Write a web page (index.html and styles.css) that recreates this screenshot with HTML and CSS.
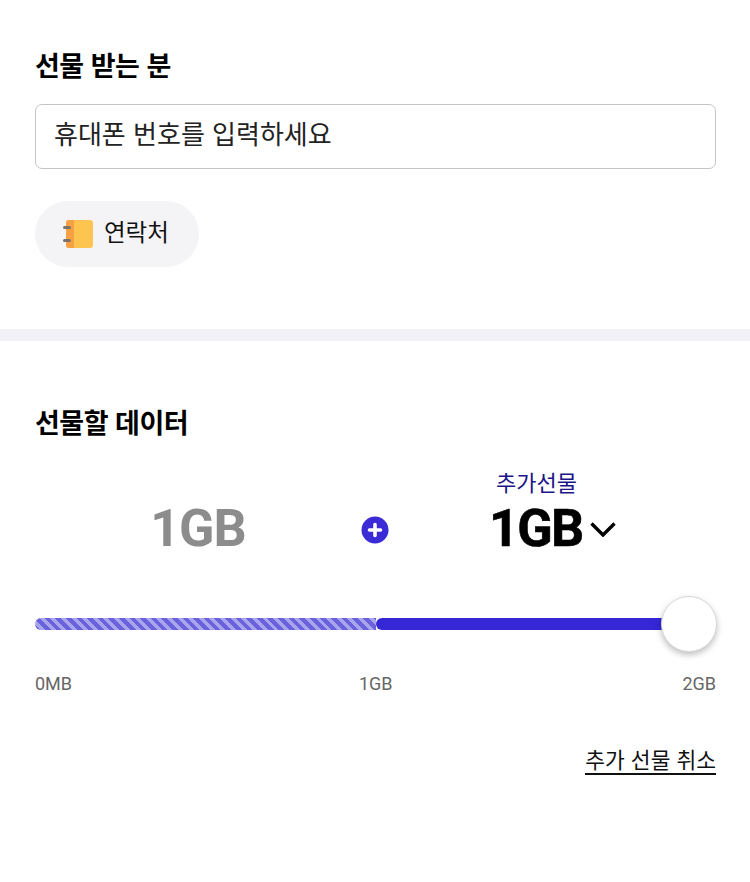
FILE: index.html
```html
<!DOCTYPE html>
<html lang="ko">
<head>
    <meta charset="UTF-8">
    <title>데이터 선물하기</title>
    <link rel="stylesheet" href="styles.css">
</head>
<body>
    <section class="receiver">
        <h2>선물 받는 분</h2>
        <div class="phone-input">휴대폰 번호를 입력하세요</div>
        <button class="contact-btn">
            <svg width="32" height="30" viewBox="0 0 32 30">
                <rect x="3" y="1" width="27" height="28" rx="3" fill="#fdc44f"/>
                <path d="M6 1h5v28H6a3 3 0 0 1-3-3V4a3 3 0 0 1 3-3z" fill="#f7a044"/>
                <rect x="0" y="7" width="8" height="3" rx="1.5" fill="#7a736c"/>
                <rect x="0" y="20" width="8" height="3" rx="1.5" fill="#7a736c"/>
            </svg>
            <span class="contact-label">연락처</span>
        </button>
    </section>

    <div class="divider"></div>

    <section class="data">
        <h2>선물할 데이터</h2>
        <div class="amounts">
            <div class="amount base">1GB</div>
            <svg class="plus" width="28" height="28" viewBox="0 0 28 28">
                <circle cx="14" cy="14" r="13.5" fill="#3b2bd6"/>
                <path d="M14 8.5v11M8.5 14h11" stroke="#fff" stroke-width="3.6" stroke-linecap="round"/>
            </svg>
            <div class="extra">
                <div class="extra-label">추가선물</div>
                <div class="extra-value">
                    <span class="amount amount-extra">1GB</span>
                    <svg width="26" height="16" viewBox="0 0 26 16">
                        <path d="M1.5 2.5l11.5 11.5 11.5-11.5" fill="none" stroke="#000" stroke-width="3.4"/>
                    </svg>
                </div>
            </div>
        </div>

        <div class="slider">
            <div class="track">
                <div class="track-base"></div>
                <div class="track-extra"></div>
            </div>
            <div class="thumb"></div>
        </div>
        <div class="scale">
            <span>0MB</span>
            <span class="scale-mid">1GB</span>
            <span>2GB</span>
        </div>

        <div class="cancel-row">
            <a class="cancel" href="#">추가 선물 취소</a>
        </div>
    </section>
</body>
</html>
```

FILE: styles.css
```css
body {
    font-family: 'Noto Sans CJK KR', 'Noto Sans', sans-serif;
    margin: 0;
    padding: 0;
    background: #fff;
    color: #000;
    width: 750px;
    height: 882px;
    overflow: hidden;
}

h2 {
    font-size: 27px;
    line-height: 36px;
    font-weight: 700;
    margin: 0;
    letter-spacing: -0.5px;
}

.receiver {
    height: 329px;
    box-sizing: border-box;
    padding: 47px 34px 0 35px;
}

.phone-input {
    margin-top: 21px;
    height: 65px;
    box-sizing: border-box;
    border: 1px solid #c4c4c8;
    border-radius: 7px;
    padding: 0 18px;
    font-size: 26px;
    line-height: 56px;
    color: #222;
}

.contact-btn {
    display: flex;
    align-items: center;
    gap: 10px;
    width: 164px;
    height: 66px;
    margin-top: 32px;
    padding: 0 0 0 28px;
    border: none;
    border-radius: 33px;
    background: #f4f4f6;
    font-family: inherit;
    font-size: 23.5px;
    color: #111;
}

.contact-label {
    margin-bottom: 6px;
    margin-left: -1px;
}

.divider {
    height: 12px;
    background: #f1f1f7;
}

.data {
    padding: 63px 34px 0 35px;
}

.amounts {
    display: flex;
    align-items: flex-end;
    height: 107px;
    margin-top: 12px;
}

.amount {
    font-family: Roboto, sans-serif;
    font-size: 52px;
    font-weight: 700;
    line-height: 60px;
    letter-spacing: -1px;
}

.amount-extra {
    letter-spacing: -1.6px;
    -webkit-text-stroke: 0.6px #000;
}

.base {
    width: 326px;
    text-align: center;
    color: #8c8c8c;
}

.plus {
    margin-bottom: 15px;
}

.extra {
    margin-left: 100px;
    width: 150px;
}

.extra-label {
    font-size: 22px;
    line-height: 30px;
    margin-bottom: 3px;
    color: #1c1488;
    padding-left: 7px;
}

.extra-value {
    display: flex;
    align-items: center;
    gap: 7px;
}

.slider {
    position: relative;
    height: 56px;
    margin-top: 37px;
    display: flex;
    align-items: center;
}

.track {
    display: flex;
    width: 640px;
    height: 12px;
}

.track-base {
    width: 341px;
    border-radius: 6px 0 0 6px;
    background: repeating-linear-gradient(45deg, #6a62dc 0 4px, #a8a5ec 4px 7.5px);
}

.track-extra {
    flex: 1;
    background: #3526d6;
    border-radius: 6px 0 0 6px;
}

.thumb {
    position: absolute;
    right: -1px;
    top: 0;
    width: 54px;
    height: 54px;
    border-radius: 50%;
    background: #fff;
    border: 1px solid #d8d8d8;
    box-shadow: 0 3px 6px rgba(0, 0, 0, 0.25);
}

.scale {
    display: flex;
    justify-content: space-between;
    margin-top: 20px;
    font-family: Roboto, sans-serif;
    font-size: 18px;
    line-height: 24px;
    color: #666;
}

.scale-mid {
    margin-right: 3px;
}

.cancel-row {
    display: flex;
    justify-content: flex-end;
    margin-top: 48px;
}

.cancel {
    font-size: 21.5px;
    line-height: 29px;
    color: #111;
    text-decoration: none;
    border-bottom: 2px solid #111;
}
```
